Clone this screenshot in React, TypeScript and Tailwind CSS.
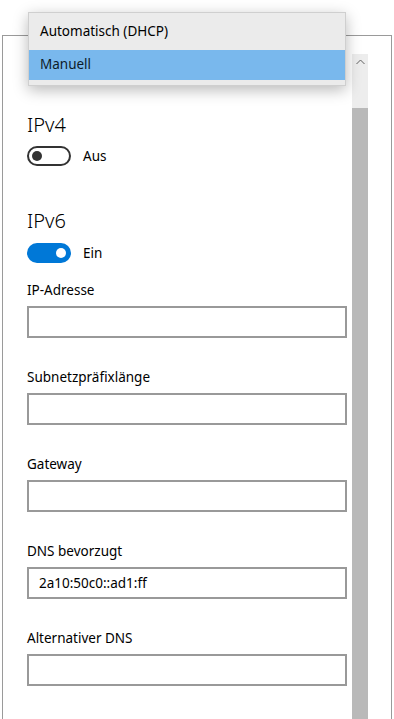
import React from 'react';

const FIELDS = [
  { label: 'IP-Adresse', value: '' },
  { label: 'Subnetzpräfixlänge', value: '' },
  { label: 'Gateway', value: '' },
  { label: 'DNS bevorzugt', value: '2a10:50c0::ad1:ff' },
  { label: 'Alternativer DNS', value: '' },
];

function Toggle({ on }: { on: boolean }) {
  return on ? (
    <div className="w-[44px] h-[20px] rounded-full bg-[#0078d7] flex items-center justify-end pr-[5px]">
      <div className="w-[10px] h-[10px] rounded-full bg-white" />
    </div>
  ) : (
    <div className="w-[44px] h-[20px] rounded-full border-2 border-[#333] flex items-center pl-[3px]">
      <div className="w-[10px] h-[10px] rounded-full bg-[#333]" />
    </div>
  );
}

export default function App() {
  return (
    <div
      className="relative w-[394px] h-[719px] overflow-hidden bg-white text-black"
      style={{ fontFamily: '"Noto Sans", "Open Sans", sans-serif' }}
    >
      {/* dialog */}
      <div className="ml-[2px] mt-[35px] w-[390px] h-[684px] border-l border-t border-r border-[#9a9a9a] bg-white flex">
        <div className="flex-1 pl-[24px] pt-[75px]">
          <div className="text-[20px] leading-[28px] font-light">IPv4</div>
          <div className="mt-[7px] h-[20px] flex items-center gap-[12px] text-[13.5px] leading-[20px]">
            <Toggle on={false} />
            <span>Aus</span>
          </div>

          <div className="mt-[41px] text-[20px] leading-[28px] font-light">IPv6</div>
          <div className="mt-[8px] h-[20px] flex items-center gap-[12px] text-[13.5px] leading-[20px]">
            <Toggle on />
            <span>Ein</span>
          </div>

          <div className="mt-[17px] flex flex-col gap-[29px]">
            {FIELDS.map((f) => (
              <div key={f.label}>
                <div className="h-[20px] text-[13.5px] leading-[20px]">{f.label}</div>
                <div className="mt-[6px] w-[320px] h-[32px] border-2 border-[#999] bg-white flex items-center pl-[10px] text-[13.5px]">
                  {f.value}
                </div>
              </div>
            ))}
          </div>
        </div>

        {/* scrollbar */}
        <div className="ml-[4px] mt-[18px] w-[16px] flex flex-col">
          <div className="h-[54px] bg-[#ededed] flex justify-center pt-[5px]">
            <svg width="9" height="6" viewBox="0 0 9 6" fill="none">
              <path d="M0.5 5 L4.5 1 L8.5 5" stroke="#606060" strokeWidth="1" />
            </svg>
          </div>
          <div className="flex-1 bg-[#b9b9b9]" />
        </div>
        <div className="w-[23px]" />
      </div>

      {/* dropdown popup */}
      <div className="absolute left-[28px] top-[12px] w-[318px] h-[74px] bg-[#ebebeb] border border-[#cfcfcf] shadow-[0_4px_14px_rgba(0,0,0,0.28)] pt-[3px] text-[13.5px]">
        <div className="h-[32px] flex items-center pl-[11px] pb-[1px]">Automatisch (DHCP)</div>
        <div className="mt-[2px] h-[30px] bg-[#79b8ed] flex items-center pl-[11px] pb-[2px] text-[#0d1b2a]">Manuell</div>
      </div>
    </div>
  );
}
